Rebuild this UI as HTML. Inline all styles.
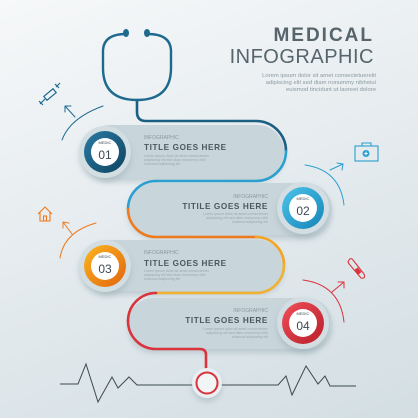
<!DOCTYPE html>
<html><head><style>
html,body{margin:0;padding:0}
body{width:418px;height:418px;overflow:hidden;background:linear-gradient(160deg,#f6f8f9 0%,#e6ecef 45%,#d3dee3 100%);font-family:"Liberation Sans",sans-serif}
</style></head><body>
<svg width="418" height="418" viewBox="0 0 418 418" xmlns="http://www.w3.org/2000/svg" style="position:absolute;left:0;top:0">
<defs>
<linearGradient id="c1" x1="0" y1="0" x2="1" y2="1"><stop offset="0" stop-color="#2a7aa3"/><stop offset="1" stop-color="#0f4460"/></linearGradient>
<linearGradient id="c2" x1="0" y1="0" x2="1" y2="1"><stop offset="0" stop-color="#4cc4ea"/><stop offset="1" stop-color="#1684b8"/></linearGradient>
<linearGradient id="c3" x1="0" y1="0" x2="1" y2="1"><stop offset="0" stop-color="#fbb520"/><stop offset="1" stop-color="#e2650e"/></linearGradient>
<linearGradient id="c4" x1="0" y1="0" x2="1" y2="1"><stop offset="0" stop-color="#f0505a"/><stop offset="1" stop-color="#b81e2a"/></linearGradient>
<filter id="sh" x="-20%" y="-20%" width="140%" height="160%"><feDropShadow dx="0" dy="4" stdDeviation="3" flood-color="#7f98a3" flood-opacity="0.35"/></filter>
</defs>
<g filter="url(#sh)">
<rect x="84" y="125" width="200" height="53" rx="26.5" fill="#c8d5db"/>
<rect x="128" y="183" width="204" height="52" rx="26" fill="#c8d5db"/>
<rect x="84" y="240" width="200" height="51" rx="25.5" fill="#c8d5db"/>
<rect x="128" y="298" width="204" height="51" rx="25.5" fill="#c8d5db"/>
</g>
<g fill="none" stroke-width="2.6" stroke-linecap="round">
<path d="M137,100 V112 Q137,121 146,121 H256 A30,30 0 0 1 286,151" stroke="#1c5f82"/>
<path d="M286,151 A30,30 0 0 1 256,181 H156" stroke="#2a9fd0"/>
<path d="M156,181 A28,28 0 0 0 128,209" stroke="#2a9fd0"/>
<path d="M128,209 A28,28 0 0 0 156,237 H256" stroke="#ef7a1e"/>
<path d="M256,237 A28,28 0 0 1 284,265" stroke="#f4a422"/>
<path d="M284,265 A28,28 0 0 1 256,293 H156" stroke="#f0b030"/>
<path d="M156,293 A28,28 0 0 0 128,321" stroke="#d9333c"/>
<path d="M128,321 A28,28 0 0 0 156,349 H200 Q206,349 206,355 V370" stroke="#d9333c"/>
</g>
<g fill="none" stroke="#1e6a8f" stroke-width="2.4" stroke-linecap="round">
<path d="M126,34 Q104,34 103,50 V68 Q103,100 137,100 Q171,100 171,68 V50 Q170,34 148,34"/>
</g>
<ellipse cx="126" cy="33" rx="3" ry="4" fill="#1e6a8f"/>
<ellipse cx="147" cy="33" rx="3" ry="4" fill="#1e6a8f"/>
<polyline fill="none" stroke="#3a4a52" stroke-width="1" points="60,384 78,384 86,364 98,402 112,377 118,388 129,377 137,385 193,385"/>
<polyline fill="none" stroke="#3a4a52" stroke-width="1" points="221,385 278,385 286,376 292,395 306,366 318,384 325,376 330,386 356,386"/>
<circle cx="207" cy="383" r="15" fill="#e8eef1" filter="url(#sh)"/>
<circle cx="207" cy="383" r="10.5" fill="#f2f5f6" stroke="#d9333c" stroke-width="2"/>
<g filter="url(#sh)">
<circle cx="105" cy="152" r="26" fill="#d3dee3"/>
<circle cx="303" cy="208" r="26" fill="#d3dee3"/>
<circle cx="105" cy="266" r="26" fill="#d3dee3"/>
<circle cx="303" cy="323" r="26" fill="#d3dee3"/>
</g>
<circle cx="105" cy="152" r="21" fill="url(#c1)"/>
<circle cx="303" cy="208" r="21" fill="url(#c2)"/>
<circle cx="105" cy="266" r="21" fill="url(#c3)"/>
<circle cx="303" cy="323" r="21" fill="url(#c4)"/>
<g fill="#fff"><circle cx="105" cy="152" r="14"/><circle cx="303" cy="208" r="14"/><circle cx="105" cy="266" r="14"/><circle cx="303" cy="323" r="14"/></g>
<g font-family="Liberation Sans,sans-serif" fill="#3c4a52" text-anchor="middle">
<text x="105" y="144" font-size="4">MEDIC</text><text x="105" y="159" font-size="12">01</text>
<text x="303" y="200" font-size="4">MEDIC</text><text x="303" y="215" font-size="12">02</text>
<text x="105" y="258" font-size="4">MEDIC</text><text x="105" y="273" font-size="12">03</text>
<text x="303" y="315" font-size="4">MEDIC</text><text x="303" y="330" font-size="12">04</text>
</g>
<g font-family="Liberation Sans,sans-serif">
<g fill="#8a9aa2" font-size="5">
<text x="144" y="139">INFOGRAPHIC</text>
<text x="268" y="198" text-anchor="end">INFOGRAPHIC</text>
<text x="144" y="254">INFOGRAPHIC</text>
<text x="268" y="312" text-anchor="end">INFOGRAPHIC</text>
</g>
<g fill="#4a5960" font-size="8.2" font-weight="bold" letter-spacing="0.6">
<text x="144" y="150">TITLE GOES HERE</text>
<text x="268" y="209" text-anchor="end">TITILE GOES HERE</text>
<text x="144" y="266">TITLE GOES HERE</text>
<text x="268" y="323" text-anchor="end">TITLE GOES HERE</text>
</g>
<g fill="#9aaab2" font-size="3.6">
<text x="144" y="157">Lorem ipsum dolor sit amet consectetuer</text><text x="144" y="161">adipiscing elit sed diam nonummy nibh</text><text x="144" y="165">euismod adipiscing elit</text>
<text x="268" y="215" text-anchor="end">Lorem ipsum dolor sit amet consectetuer</text><text x="268" y="219" text-anchor="end">adipiscing elit sed diam nonummy nibh</text><text x="268" y="223" text-anchor="end">euismod adipiscing elit</text>
<text x="144" y="272">Lorem ipsum dolor sit amet consectetuer</text><text x="144" y="276">adipiscing elit sed diam nonummy nibh</text><text x="144" y="280">euismod adipiscing elit</text>
<text x="268" y="330" text-anchor="end">Lorem ipsum dolor sit amet consectetuer</text><text x="268" y="334" text-anchor="end">adipiscing elit sed diam nonummy nibh</text><text x="268" y="338" text-anchor="end">euismod adipiscing elit</text>
</g>
<text x="374" y="41" text-anchor="end" font-size="19" font-weight="bold" fill="#56656c" letter-spacing="2">MEDICAL</text>
<text x="374" y="63" text-anchor="end" font-size="20" fill="#56656c" letter-spacing="0.5">INFOGRAPHIC</text>
<g fill="#8a9aa2" font-size="5.9" text-anchor="end">
<text x="376" y="77">Lorem ipsum dolor sit amet consectetuerelit</text>
<text x="376" y="84">adipiscing elit sed diam nonummy nibheiui</text>
<text x="376" y="91">euismod tincidunt ut laoreet dolore</text>
</g>
</g>
<g fill="none" stroke-width="1" stroke-linecap="round">
<path d="M62,140 Q70,118 103,106" stroke="#1e6a8f"/><path d="M75,117 L65,106 M65,106 L65,112 M65,106 L71,106" stroke="#1e6a8f"/>
<path d="M305,165 Q340,170 344,205" stroke="#2a9fd0"/><path d="M330,170 L343,164 M343,164 L337,163 M343,164 L342,170" stroke="#2a9fd0"/>
<path d="M60,258 Q64,232 96,223" stroke="#ef7a1e"/><path d="M72,234 L63,222 M63,222 L63,228 M63,222 L69,223" stroke="#ef7a1e"/>
<path d="M303,280 Q340,285 344,322" stroke="#d9333c"/><path d="M332,292 L344,282 M344,282 L338,282 M344,282 L344,288" stroke="#d9333c"/>
</g>
<g fill="none" stroke="#1e6a8f" stroke-width="1.2">
<rect x="44" y="92" width="12" height="5" transform="rotate(-40 50 94.5)"/>
<path d="M40,104 L45,99 M56,87 L60,83 M39,101 L43,105 M55,84 L59,88"/>
</g>
<g fill="none" stroke="#ef7a1e" stroke-width="1.1">
<path d="M38,214 L45,207 L52,214 M40,212 V221 H50 V212"/><rect x="43.5" y="216" width="3" height="5"/>
</g>
<g fill="none" stroke="#2a9fd0" stroke-width="1.1">
<rect x="355" y="146" width="23" height="15"/><path d="M362,146 V143 H371 V146"/>
</g>
<circle cx="366" cy="153.5" r="3.5" fill="#2a9fd0"/>
<path d="M364.3,153.5 H367.7 M366,151.8 V155.2" stroke="#fff" stroke-width="1"/>
<g fill="none" stroke="#d9333c" stroke-width="1.1">
<path d="M349,260 Q351,257 353,260 L364,274 Q366,279 361,278 L350,265 Q347,262 349,260 Z"/>
</g>
<rect x="356" y="268" width="4" height="6" fill="#d9333c" transform="rotate(-40 358 271)"/>
</svg>
</body></html>
